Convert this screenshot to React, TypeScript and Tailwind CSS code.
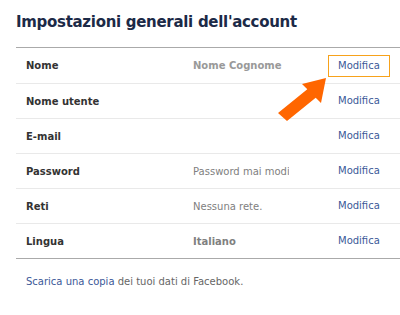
const rows = [
  { label: "Nome", value: "Nome Cognome", valueClass: "font-bold text-[#999999]", boxed: true },
  { label: "Nome utente", value: "", valueClass: "", boxed: false },
  { label: "E-mail", value: "", valueClass: "", boxed: false },
  { label: "Password", value: "Password mai modificata.", valueClass: "text-[#808080]", boxed: false },
  { label: "Reti", value: "Nessuna rete.", valueClass: "text-[#808080]", boxed: false },
  { label: "Lingua", value: "Italiano", valueClass: "font-bold text-[#808080]", boxed: false },
];

function Arrow() {
  return (
    <svg
      className="pointer-events-none absolute left-0 top-0"
      width="400"
      height="315"
      viewBox="0 0 400 315"
    >
      <polygon
        fill="#ff6600"
        points="326,78 302,84 307.3,89.3 278,113 287,121 315.7,97.7 321,103"
      />
    </svg>
  );
}

export default function App() {
  return (
    <div
      className="relative h-[315px] w-[400px] overflow-hidden bg-white"
      style={{ fontFamily: '"DejaVu Sans", Tahoma, sans-serif' }}
    >
      <div className="pl-4 pt-[11px]">
        <h2 className="h-[36px] text-[15px] font-bold leading-[22px] tracking-[-0.3px] text-[#1c2a47]">
          Impostazioni generali dell'account
        </h2>
        <div className="border-y border-[#aaaaaa]">
          {rows.map((r, i) => (
            <div
              key={r.label}
              className={
                "flex h-[35px] items-center text-[10px] " +
                (i > 0 ? "border-t border-[#e9e9e9]" : "")
              }
            >
              <div className="w-[177px] pl-[10px] font-bold text-[#333333]">{r.label}</div>
              <div className={"w-[96px] overflow-hidden whitespace-nowrap " + r.valueClass}>
                {r.value}
              </div>
              <div className="ml-[39px] flex">
                <a
                  className={
                    "block h-[22px] border px-[9px] leading-[20px] text-[#3b5998] " +
                    (r.boxed ? "border-[#f7a21b]" : "border-transparent")
                  }
                >
                  Modifica
                </a>
              </div>
            </div>
          ))}
        </div>
        <p className="pl-[10px] pt-[15px] text-[10px] text-[#666666]">
          <a className="text-[#3b5998]">Scarica una copia</a> dei tuoi dati di Facebook.
        </p>
      </div>
      <Arrow />
    </div>
  );
}
